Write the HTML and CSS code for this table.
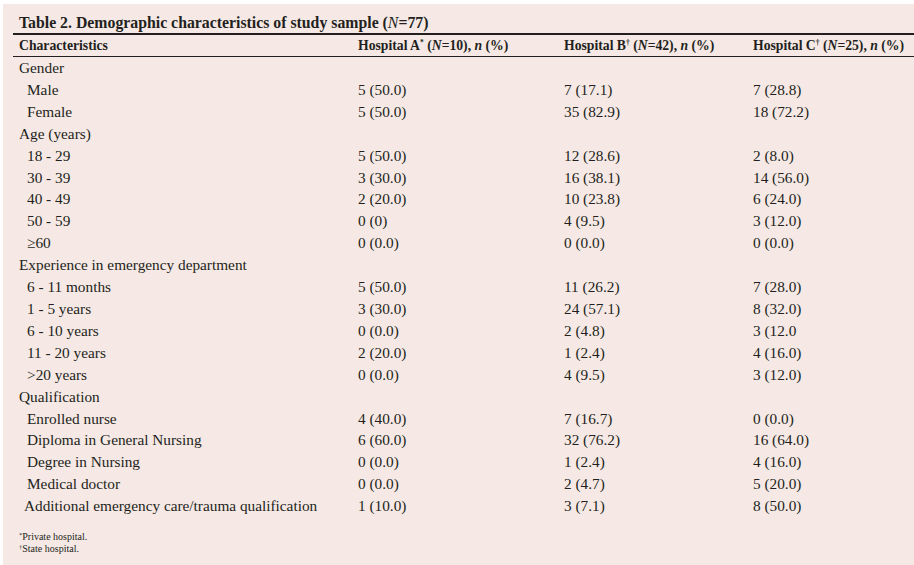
FILE: index.html
```html
<!DOCTYPE html>
<html>
<head>
<meta charset="utf-8">
<link rel="stylesheet" href="styles.css">
</head>
<body>
<div class="sheet">
  <h1 class="title">Table 2. Demographic characteristics of study sample (<i>N</i>=77)</h1>
  <table class="data">
    <colgroup>
      <col class="c1"><col class="c2"><col class="c3"><col class="c4">
    </colgroup>
    <thead>
      <tr>
        <th>Characteristics</th>
        <th>Hospital A<sup>*</sup> (<i>N</i>=10), <i>n</i> (%)</th>
        <th>Hospital B<sup>†</sup> (<i>N</i>=42), <i>n</i> (%)</th>
        <th>Hospital C<sup>†</sup> (<i>N</i>=25), <i>n</i> (%)</th>
      </tr>
    </thead>
    <tbody>
      <tr class="grp first"><td>Gender</td><td></td><td></td><td></td></tr>
      <tr><td class="sub">Male</td><td>5 (50.0)</td><td>7 (17.1)</td><td>7 (28.8)</td></tr>
      <tr><td class="sub">Female</td><td>5 (50.0)</td><td>35 (82.9)</td><td>18 (72.2)</td></tr>
      <tr class="grp"><td>Age (years)</td><td></td><td></td><td></td></tr>
      <tr><td class="sub">18 - 29</td><td>5 (50.0)</td><td>12 (28.6)</td><td>2 (8.0)</td></tr>
      <tr><td class="sub">30 - 39</td><td>3 (30.0)</td><td>16 (38.1)</td><td>14 (56.0)</td></tr>
      <tr><td class="sub">40 - 49</td><td>2 (20.0)</td><td>10 (23.8)</td><td>6 (24.0)</td></tr>
      <tr><td class="sub">50 - 59</td><td>0 (0)</td><td>4 (9.5)</td><td>3 (12.0)</td></tr>
      <tr><td class="sub">≥60</td><td>0 (0.0)</td><td>0 (0.0)</td><td>0 (0.0)</td></tr>
      <tr class="grp"><td>Experience in emergency department</td><td></td><td></td><td></td></tr>
      <tr><td class="sub">6 - 11 months</td><td>5 (50.0)</td><td>11 (26.2)</td><td>7 (28.0)</td></tr>
      <tr><td class="sub">1 - 5 years</td><td>3 (30.0)</td><td>24 (57.1)</td><td>8 (32.0)</td></tr>
      <tr><td class="sub">6 - 10 years</td><td>0 (0.0)</td><td>2 (4.8)</td><td>3 (12.0</td></tr>
      <tr><td class="sub">11 - 20 years</td><td>2 (20.0)</td><td>1 (2.4)</td><td>4 (16.0)</td></tr>
      <tr><td class="sub">&gt;20 years</td><td>0 (0.0)</td><td>4 (9.5)</td><td>3 (12.0)</td></tr>
      <tr class="grp"><td>Qualification</td><td></td><td></td><td></td></tr>
      <tr><td class="sub">Enrolled nurse</td><td>4 (40.0)</td><td>7 (16.7)</td><td>0 (0.0)</td></tr>
      <tr><td class="sub">Diploma in General Nursing</td><td>6 (60.0)</td><td>32 (76.2)</td><td>16 (64.0)</td></tr>
      <tr><td class="sub">Degree in Nursing</td><td>0 (0.0)</td><td>1 (2.4)</td><td>4 (16.0)</td></tr>
      <tr><td class="sub">Medical doctor</td><td>0 (0.0)</td><td>2 (4.7)</td><td>5 (20.0)</td></tr>
      <tr><td class="sub2">Additional emergency care/trauma qualification</td><td>1 (10.0)</td><td>3 (7.1)</td><td>8 (50.0)</td></tr>
    </tbody>
  </table>
  <div class="notes">
    <p><sup>*</sup>Private hospital.</p>
    <p><sup>†</sup>State hospital.</p>
  </div>
</div>
</body>
</html>
```

FILE: styles.css
```css
html, body {
  margin: 0;
  padding: 0;
  background: #ffffff;
}
body {
  font-family: "Liberation Serif", "Times New Roman", serif;
  color: #231f20;
}
.sheet {
  margin: 4px 0 0 3px;
  height: 561px;
  background: #f6e9e5;
  box-sizing: border-box;
  padding-top: 9px;
  overflow: hidden;
}
.title {
  margin: 0 0 0 16px;
  font-size: 15.8px;
  font-weight: bold;
  line-height: 20px;
  white-space: nowrap;
}
.title i { font-weight: normal; }
.data {
  margin: 0 0 0 10px;
  width: 901px;
  border-collapse: collapse;
  table-layout: fixed;
  font-size: 15.3px;
}
.c1 { width: 345px; }
.c2 { width: 206px; }
.c3 { width: 189px; }
.c4 { width: 161px; }
.data thead th {
  border-top: 2px solid #231f20;
  border-bottom: 1px solid #231f20;
  font-size: 13.7px;
  font-weight: bold;
  text-align: left;
  padding: 3px 0 2px 0;
  height: 16px;
  line-height: 16px;
  white-space: nowrap;
}
.data thead th:first-child { padding-left: 6px; }
.data thead th i { font-weight: bold; }
.data sup {
  font-size: 7.5px;
  line-height: 0;
  vertical-align: 5px;
}
.data td {
  padding: 0;
  height: 21.9px;
  line-height: 21.9px;
  white-space: nowrap;
}
.data td:first-child { padding-left: 6px; }
.data td.sub { padding-left: 14px; }
.data td.sub2 { padding-left: 11px; }
.data tr.first td { padding-top: 0; }
.notes {
  margin: 14px 0 0 16px;
  font-size: 10px;
  line-height: 12px;
}
.notes p { margin: 0; }
.notes sup {
  font-size: 6.5px;
  line-height: 0;
  vertical-align: 3px;
}
```
